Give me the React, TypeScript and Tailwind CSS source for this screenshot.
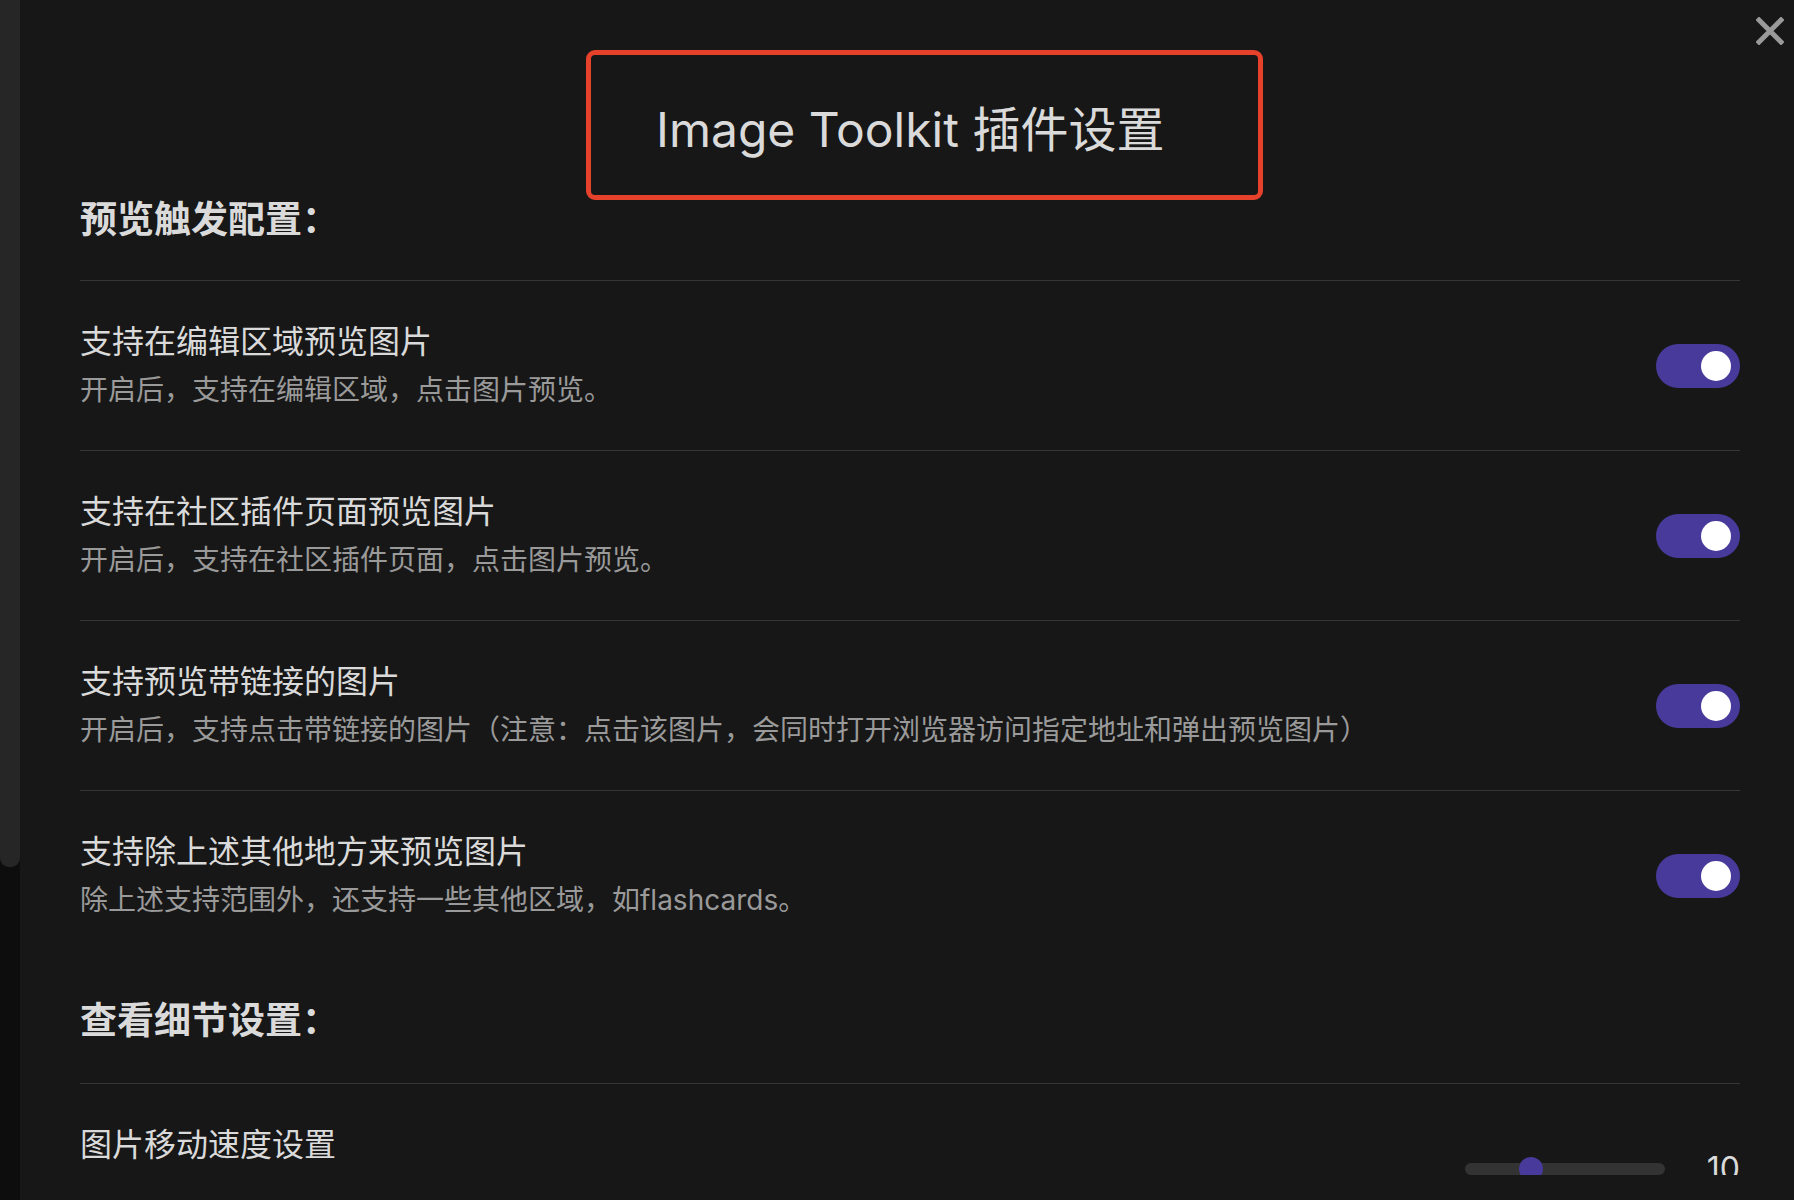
import type { ReactNode } from "react";

const font = { fontFamily: 'Inter, "Noto Sans CJK SC", sans-serif' };

type Row = { name: string; desc: string };

const previewRows: Row[] = [
  { name: "支持在编辑区域预览图片", desc: "开启后，支持在编辑区域，点击图片预览。" },
  { name: "支持在社区插件页面预览图片", desc: "开启后，支持在社区插件页面，点击图片预览。" },
  {
    name: "支持预览带链接的图片",
    desc: "开启后，支持点击带链接的图片（注意：点击该图片，会同时打开浏览器访问指定地址和弹出预览图片）",
  },
  { name: "支持除上述其他地方来预览图片", desc: "除上述支持范围外，还支持一些其他区域，如flashcards。" },
];

function Toggle() {
  return (
    <div className="flex h-[44px] w-[84px] shrink-0 items-center justify-end rounded-full bg-[#483a9b] pr-[9px]">
      <div className="h-[30px] w-[30px] rounded-full bg-white" />
    </div>
  );
}

function SettingRow({ name, desc, control }: { name: string; desc: string; control: ReactNode }) {
  return (
    <div className="flex h-[170px] items-center justify-between border-t border-[#363636]">
      <div>
        <div className="text-[32px] leading-[44px] text-[#dadada]">{name}</div>
        <div className="mt-[4px] h-[44px] text-[28px] leading-[44px] text-[#9a9a9a]">{desc}</div>
      </div>
      {control}
    </div>
  );
}

export default function App() {
  return (
    <div className="flex h-[1200px] w-[1794px] overflow-hidden bg-[#171717]" style={font}>
      {/* scrollbar strip */}
      <div className="h-full w-[20px] shrink-0 bg-[#0d0d0d]">
        <div className="h-[867px] rounded-b-[9px] bg-[#262626]" />
      </div>

      <div className="relative flex-1">
        <button className="absolute right-[10px] top-[17px] text-[#9a9a9a]">
          <svg width="28" height="28" viewBox="0 0 28 28">
            <path d="M3 3 L25 25 M25 3 L3 25" stroke="currentColor" strokeWidth="5" strokeLinecap="square" />
          </svg>
        </button>

        <div className="h-[1175px] overflow-hidden pl-[60px] pr-[54px] pt-[50px]">
          {/* Title */}
          <div className="ml-[506px] flex h-[150px] w-[677px] items-center rounded-[9px] border-[5px] border-[#e5412b] pl-[65px] pt-[10px]">
            <span className="text-[48px] leading-[60px] text-[#dadada]">Image Toolkit 插件设置</span>
          </div>

          <div className="pb-[40px] text-[37px] font-bold leading-[40px] text-[#dadada]">预览触发配置：</div>

          {previewRows.map((r) => (
            <SettingRow key={r.name} name={r.name} desc={r.desc} control={<Toggle />} />
          ))}

          <div className="pb-[42px] pt-[41px] text-[37px] font-bold leading-[40px] text-[#dadada]">查看细节设置：</div>

          <SettingRow
            name="图片移动速度设置"
            desc=""
            control={
              <div className="flex items-center">
                <div className="relative h-[12px] w-[200px] rounded-full bg-[#333333]">
                  <div className="absolute left-[54px] top-[-6px] h-[24px] w-[24px] rounded-full bg-[#483a9b]" />
                </div>
                <span className="ml-[42px] text-[32px] leading-[40px] text-[#dadada]">10</span>
              </div>
            }
          />
        </div>
      </div>
    </div>
  );
}
